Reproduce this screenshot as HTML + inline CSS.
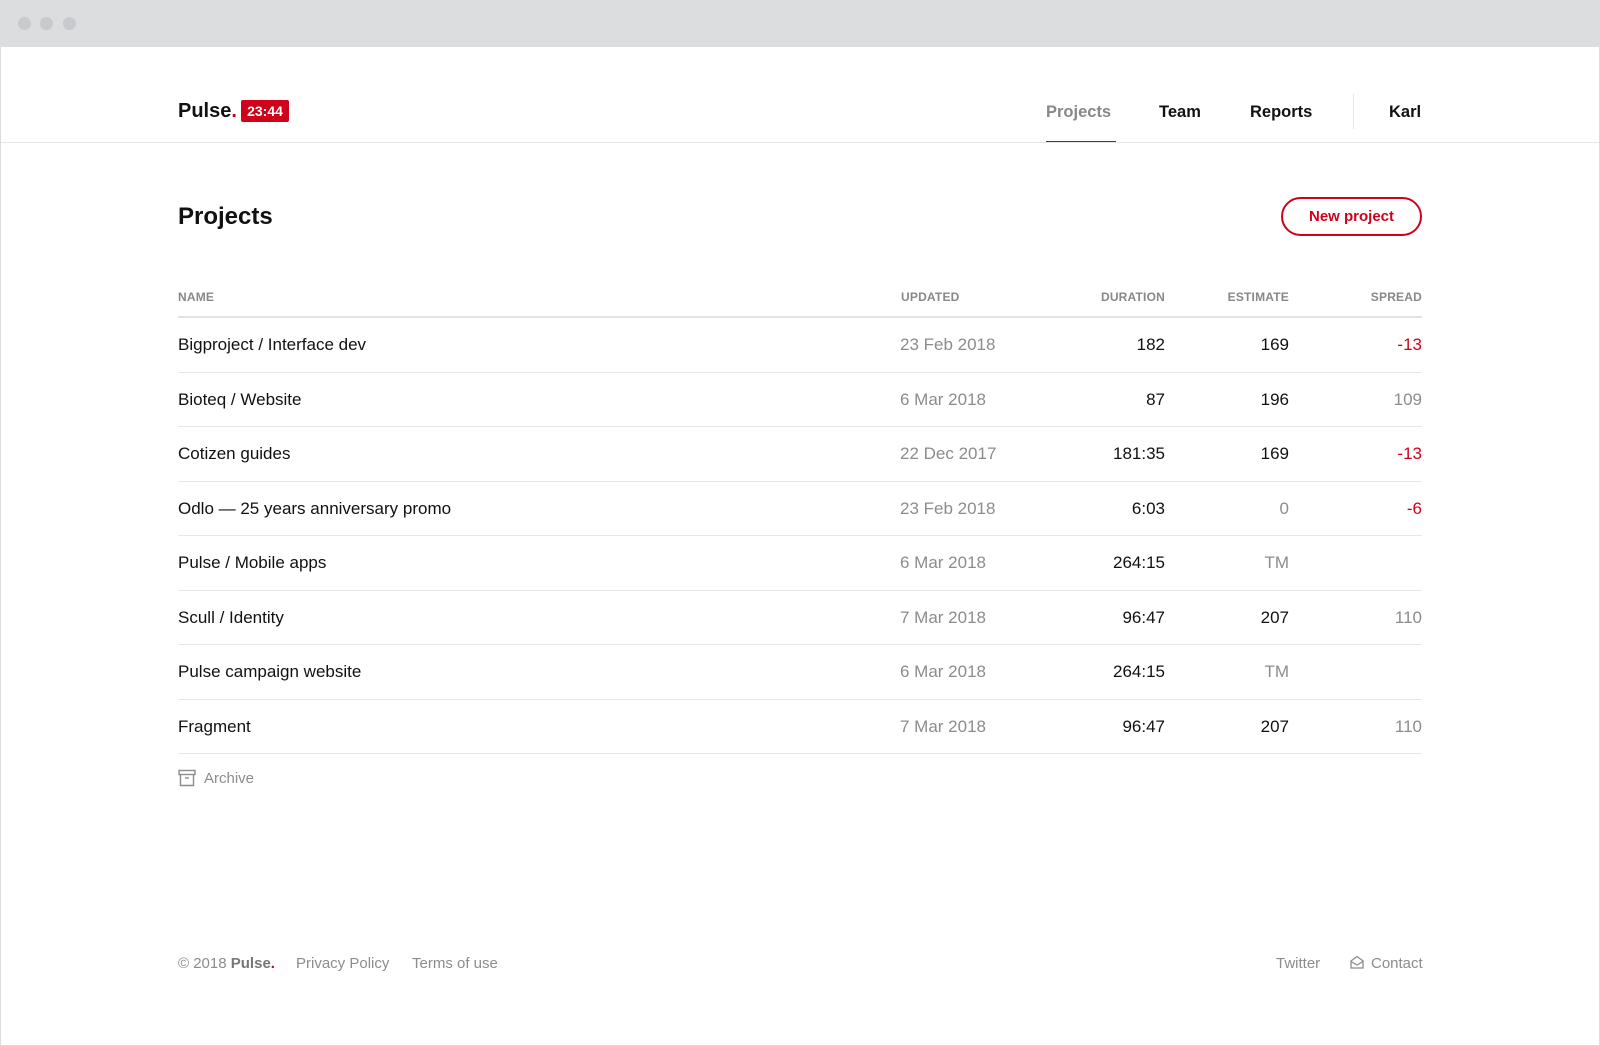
<!DOCTYPE html>
<html><head><meta charset="utf-8"><style>
*{margin:0;padding:0;box-sizing:border-box}
html,body{width:1600px;height:1046px;overflow:hidden;background:#fff;font-family:"Liberation Sans",Arial,sans-serif;color:#111}
.bar{position:absolute;left:0;top:0;width:1600px;height:47px;background:#dcdddf}
.dot{position:absolute;top:17px;width:13px;height:13px;border-radius:50%;background:#c9cacd}
.frame{position:absolute;left:0;top:47px;width:1600px;height:999px;border:1px solid #dcdddf;border-top:none}
.a{position:absolute;white-space:nowrap}
.hline{position:absolute;left:1px;width:1598px;top:142px;height:1px;background:#e6e6e6}
.nav{font-size:16.5px;font-weight:bold;top:103px}
.row{position:absolute;left:178px;width:1244px;height:54.5px;border-bottom:1px solid #e8e8e8;font-size:17px}
.row span{position:absolute;top:17px;white-space:nowrap}
.c1{left:0}.c2{left:722px;color:#8c8c8c}.c3{right:257px;width:100px;text-align:right}
.c4{right:133px;width:100px;text-align:right}.c5{right:0;width:100px;text-align:right;color:#8c8c8c}
.g{color:#8c8c8c!important}.r{color:#d0021b!important}
.th{font-size:12px;color:#888;top:290px;font-weight:bold;letter-spacing:0.2px}
.ft{font-size:15px;color:#8c8c8c;top:955px}
</style></head><body>
<div class="bar"></div>
<div class="dot" style="left:18px"></div><div class="dot" style="left:40px"></div><div class="dot" style="left:63px"></div>
<div class="frame"></div>
<div class="a" style="left:178px;top:100px;font-size:20px;font-weight:bold">Pulse<span style="color:#d0021b">.</span></div>
<div class="a" style="left:241px;top:100px;width:48px;height:22px;background:#d0021b;border-radius:2px;color:#fff;font-size:14px;font-weight:bold;text-align:center;line-height:22px">23:44</div>
<div class="a nav" style="left:1046px;color:#888">Projects</div>
<div class="a" style="left:1046px;top:141px;width:70px;height:2px;background:#d0021b"></div>
<div class="a nav" style="left:1159px">Team</div>
<div class="a nav" style="left:1250px">Reports</div>
<div class="a" style="left:1353px;top:94px;width:1px;height:35px;background:#e6e6e6"></div>
<div class="a nav" style="left:1389px">Karl</div>
<div class="hline"></div>
<div class="a" style="left:178px;top:203px;font-size:24px;font-weight:bold">Projects</div>
<div class="a" style="left:1281px;top:197px;width:141px;height:39px;border:2px solid #d0021b;border-radius:20px;color:#d0021b;font-size:15px;font-weight:bold;text-align:center;line-height:35px">New project</div>
<div class="a th" style="left:178px">NAME</div>
<div class="a th" style="left:901px">UPDATED</div>
<div class="a th" style="left:1065px;width:100px;text-align:right">DURATION</div>
<div class="a th" style="left:1189px;width:100px;text-align:right">ESTIMATE</div>
<div class="a th" style="left:1322px;width:100px;text-align:right">SPREAD</div>
<div class="a" style="left:178px;top:316px;width:1244px;height:2px;background:#e3e3e3"></div>
<div class="row" style="top:318px"><span class="c1">Bigproject / Interface dev</span><span class="c2">23 Feb 2018</span><span class="c3">182</span><span class="c4">169</span><span class="c5 r">-13</span></div>
<div class="row" style="top:372.5px"><span class="c1">Bioteq / Website</span><span class="c2">6 Mar 2018</span><span class="c3">87</span><span class="c4">196</span><span class="c5">109</span></div>
<div class="row" style="top:427px"><span class="c1">Cotizen guides</span><span class="c2">22 Dec 2017</span><span class="c3">181:35</span><span class="c4">169</span><span class="c5 r">-13</span></div>
<div class="row" style="top:481.5px"><span class="c1">Odlo — 25 years anniversary promo</span><span class="c2">23 Feb 2018</span><span class="c3">6:03</span><span class="c4 g">0</span><span class="c5 r">-6</span></div>
<div class="row" style="top:536px"><span class="c1">Pulse / Mobile apps</span><span class="c2">6 Mar 2018</span><span class="c3">264:15</span><span class="c4 g">TM</span></div>
<div class="row" style="top:590.5px"><span class="c1">Scull / Identity</span><span class="c2">7 Mar 2018</span><span class="c3">96:47</span><span class="c4">207</span><span class="c5">110</span></div>
<div class="row" style="top:645px"><span class="c1">Pulse campaign website</span><span class="c2">6 Mar 2018</span><span class="c3">264:15</span><span class="c4 g">TM</span></div>
<div class="row" style="top:699.5px"><span class="c1">Fragment</span><span class="c2">7 Mar 2018</span><span class="c3">96:47</span><span class="c4">207</span><span class="c5">110</span></div>
<svg class="a" style="left:178px;top:769px" width="18" height="18" viewBox="0 0 18 18" fill="none" stroke="#8c8c8c" stroke-width="1.4"><rect x="1" y="1.5" width="16" height="4"/><path d="M2.5 5.5V16.5H15.5V5.5"/><path d="M7 9h4"/></svg>
<div class="a" style="left:204px;top:770px;font-size:15px;color:#8c8c8c">Archive</div>
<div class="a ft" style="left:178px">© 2018 <b style="color:#777">Pulse<span style="color:#d0021b">.</span></b></div>
<div class="a ft" style="left:296px">Privacy Policy</div>
<div class="a ft" style="left:412px">Terms of use</div>
<div class="a ft" style="left:1276px">Twitter</div>
<svg class="a" style="left:1350px;top:955px" width="14" height="14" viewBox="0 0 14 14" fill="none" stroke="#8c8c8c" stroke-width="1.3"><path d="M1 6L7 1.5 13 6V13H1Z"/><path d="M1 6.5L7 10 13 6.5"/></svg>
<div class="a ft" style="left:1371px">Contact</div>
</body></html>
